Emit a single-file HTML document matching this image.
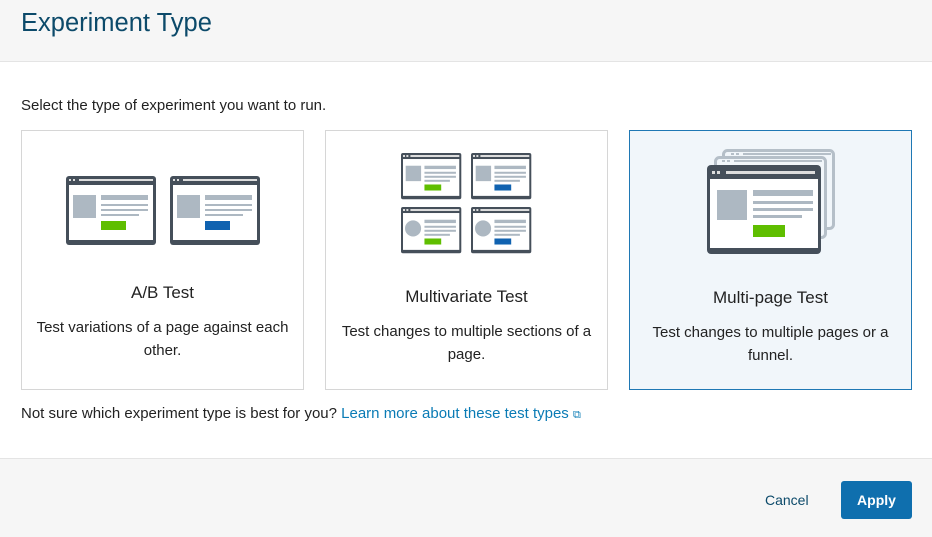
<!DOCTYPE html>
<html><head><meta charset="utf-8"><style>
*{box-sizing:border-box;margin:0;padding:0}
body{width:932px;height:537px;background:#fff;font-family:"Liberation Sans",sans-serif;color:#222;position:relative;overflow:hidden}
.hdr{position:absolute;left:0;top:0;width:932px;height:62px;background:#f6f6f6;border-bottom:1px solid #e4e4e4}
.hdr h1{position:absolute;left:21px;top:9px;font-weight:normal;font-size:25.5px;color:#0c4a6a}
.intro{position:absolute;left:21px;top:97px;font-size:15px}
.card{position:absolute;top:130px;width:283px;height:260px;border:1px solid #d6d6d6;text-align:center}
.card.sel{background:#f1f6fa;border-color:#1f78b4}
.card h3{position:absolute;left:0;right:0;font-weight:normal;font-size:17px}
.card p{position:absolute;left:8px;right:8px;font-size:15px;line-height:23px}
.card svg{position:absolute;left:0;top:0}
.note{position:absolute;left:21px;top:405px;font-size:15px}
.note a{color:#0a7bb5;text-decoration:none}
.ftr{position:absolute;left:0;top:458px;width:932px;height:79px;background:#f6f6f6;border-top:1px solid #e4e4e4}
.cancel{position:absolute;left:765px;top:492px;font-size:14px;color:#0c4a6a}
.apply{position:absolute;left:841px;top:481px;width:71px;height:38px;background:#0f6fae;border-radius:3px;color:#fff;font-weight:bold;font-size:14px;text-align:center;line-height:38px}
</style></head><body>
<div class="hdr"><h1>Experiment Type</h1></div>
<div class="intro">Select the type of experiment you want to run.</div>

<div class="card" style="left:21px">
<svg width="283" height="140">
<g transform="translate(44,45)">
<rect x="0" y="0" width="90" height="69" rx="3" fill="#454f5a"/><rect x="3" y="9" width="84" height="55" fill="#fff"/>
<rect x="3" y="3" width="2" height="2" fill="#ddd"/><rect x="7" y="3" width="2" height="2" fill="#ddd"/><rect x="13" y="3" width="74" height="2" fill="#ddd"/>
<rect x="7" y="19" width="23" height="23" fill="#adb8c2"/><rect x="35" y="19" width="47" height="5" fill="#adb8c2"/><rect x="35" y="28" width="47" height="2" fill="#adb8c2"/><rect x="35" y="33" width="47" height="2" fill="#adb8c2"/><rect x="35" y="38" width="38" height="2" fill="#adb8c2"/>
<rect x="35" y="45" width="25" height="9" fill="#5fbe00"/></g>
<g transform="translate(148,45)">
<rect x="0" y="0" width="90" height="69" rx="3" fill="#454f5a"/><rect x="3" y="9" width="84" height="55" fill="#fff"/>
<rect x="3" y="3" width="2" height="2" fill="#ddd"/><rect x="7" y="3" width="2" height="2" fill="#ddd"/><rect x="13" y="3" width="74" height="2" fill="#ddd"/>
<rect x="7" y="19" width="23" height="23" fill="#adb8c2"/><rect x="35" y="19" width="47" height="5" fill="#adb8c2"/><rect x="35" y="28" width="47" height="2" fill="#adb8c2"/><rect x="35" y="33" width="47" height="2" fill="#adb8c2"/><rect x="35" y="38" width="38" height="2" fill="#adb8c2"/>
<rect x="35" y="45" width="25" height="9" fill="#1062b0"/></g>
</svg>
<h3 style="top:152px">A/B Test</h3>
<p style="top:185px">Test variations of a page against each other.</p>
</div>

<div class="card" style="left:325px">
<svg width="283" height="140">
<g transform="translate(75,22) scale(0.67)">
<rect x="0" y="0" width="90" height="69" rx="3" fill="#454f5a"/><rect x="3" y="9" width="84" height="55" fill="#fff"/>
<rect x="3" y="3" width="3" height="3" fill="#ddd"/><rect x="8" y="3" width="3" height="3" fill="#ddd"/><rect x="14" y="3" width="73" height="3" fill="#ddd"/>
<rect x="7" y="19" width="23" height="23" fill="#adb8c2"/><rect x="35" y="19" width="47" height="5" fill="#adb8c2"/><rect x="35" y="28" width="47" height="3" fill="#adb8c2"/><rect x="35" y="34" width="47" height="3" fill="#adb8c2"/><rect x="35" y="40" width="38" height="3" fill="#adb8c2"/>
<rect x="35" y="47" width="25" height="9" fill="#5fbe00"/></g>
<g transform="translate(145,22) scale(0.67)">
<rect x="0" y="0" width="90" height="69" rx="3" fill="#454f5a"/><rect x="3" y="9" width="84" height="55" fill="#fff"/>
<rect x="3" y="3" width="3" height="3" fill="#ddd"/><rect x="8" y="3" width="3" height="3" fill="#ddd"/><rect x="14" y="3" width="73" height="3" fill="#ddd"/>
<rect x="7" y="19" width="23" height="23" fill="#adb8c2"/><rect x="35" y="19" width="47" height="5" fill="#adb8c2"/><rect x="35" y="28" width="47" height="3" fill="#adb8c2"/><rect x="35" y="34" width="47" height="3" fill="#adb8c2"/><rect x="35" y="40" width="38" height="3" fill="#adb8c2"/>
<rect x="35" y="47" width="25" height="9" fill="#1062b0"/></g>
<g transform="translate(75,76) scale(0.67)">
<rect x="0" y="0" width="90" height="69" rx="3" fill="#454f5a"/><rect x="3" y="9" width="84" height="55" fill="#fff"/>
<rect x="3" y="3" width="3" height="3" fill="#ddd"/><rect x="8" y="3" width="3" height="3" fill="#ddd"/><rect x="14" y="3" width="73" height="3" fill="#ddd"/>
<circle cx="18" cy="32" r="12" fill="#adb8c2"/><rect x="35" y="19" width="47" height="5" fill="#adb8c2"/><rect x="35" y="28" width="47" height="3" fill="#adb8c2"/><rect x="35" y="34" width="47" height="3" fill="#adb8c2"/><rect x="35" y="40" width="38" height="3" fill="#adb8c2"/>
<rect x="35" y="47" width="25" height="9" fill="#5fbe00"/></g>
<g transform="translate(145,76) scale(0.67)">
<rect x="0" y="0" width="90" height="69" rx="3" fill="#454f5a"/><rect x="3" y="9" width="84" height="55" fill="#fff"/>
<rect x="3" y="3" width="3" height="3" fill="#ddd"/><rect x="8" y="3" width="3" height="3" fill="#ddd"/><rect x="14" y="3" width="73" height="3" fill="#ddd"/>
<circle cx="18" cy="32" r="12" fill="#adb8c2"/><rect x="35" y="19" width="47" height="5" fill="#adb8c2"/><rect x="35" y="28" width="47" height="3" fill="#adb8c2"/><rect x="35" y="34" width="47" height="3" fill="#adb8c2"/><rect x="35" y="40" width="38" height="3" fill="#adb8c2"/>
<rect x="35" y="47" width="25" height="9" fill="#1062b0"/></g>
</svg>
<h3 style="top:156px">Multivariate Test</h3>
<p style="top:189px">Test changes to multiple sections of a page.</p>
</div>

<div class="card sel" style="left:629px">
<svg width="283" height="140">
<g fill="none" stroke="#b5bfc8" stroke-width="3">
<rect x="93.5" y="19.5" width="110" height="78" rx="4" fill="#f1f6fa"/>
<rect x="85.5" y="26.5" width="110" height="80" rx="4" fill="#f1f6fa"/>
</g>
<rect x="101" y="22" width="3" height="2" fill="#b5bfc8"/><rect x="106" y="22" width="3" height="2" fill="#b5bfc8"/><rect x="113" y="22" width="88" height="2" fill="#b5bfc8"/>
<rect x="92" y="29" width="3" height="2" fill="#b5bfc8"/><rect x="97" y="29" width="3" height="2" fill="#b5bfc8"/><rect x="104" y="29" width="88" height="2" fill="#b5bfc8"/>
<g transform="translate(77,34)">
<rect x="0" y="0" width="114" height="89" rx="4" fill="#454f5a"/><rect x="3" y="14" width="108" height="69" fill="#fff"/>
<rect x="5" y="6" width="3" height="3" fill="#ddd"/><rect x="10" y="6" width="3" height="3" fill="#ddd"/><rect x="19" y="6" width="89" height="3" fill="#ddd"/>
<rect x="10" y="25" width="30" height="30" fill="#adb8c2"/><rect x="46" y="25" width="60" height="6" fill="#adb8c2"/><rect x="46" y="36" width="60" height="3" fill="#adb8c2"/><rect x="46" y="43" width="60" height="3" fill="#adb8c2"/><rect x="46" y="50" width="49" height="3" fill="#adb8c2"/>
<rect x="46" y="60" width="32" height="12" fill="#5fbe00"/></g>
</svg>
<h3 style="top:157px">Multi-page Test</h3>
<p style="top:190px">Test changes to multiple pages or a funnel.</p>
</div>

<div class="note">Not sure which experiment type is best for you? <a>Learn more about these test types <span style="font-size:11px">&#x29C9;</span></a></div>
<div class="ftr"></div>
<div class="cancel">Cancel</div>
<div class="apply">Apply</div>
</body></html>
